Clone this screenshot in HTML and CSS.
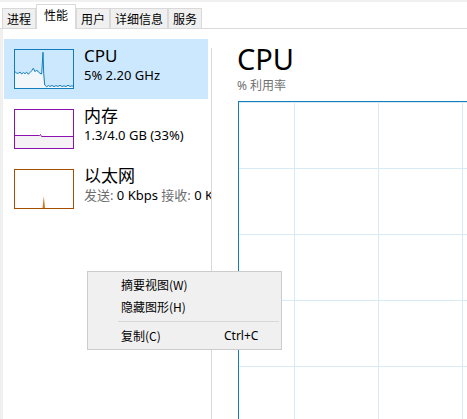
FILE: index.html
```html
<!DOCTYPE html>
<html lang="zh-CN">
<head>
<meta charset="utf-8">
<link rel="stylesheet" href="styles.css">
</head>
<body>
<div class="window">
  <div class="tabbar">
    <div class="tab">进程</div>
    <div class="tab tab-active">性能</div>
    <div class="tab">用户</div>
    <div class="tab">详细信息</div>
    <div class="tab">服务</div>
  </div>
  <div class="main">
    <div class="edge"></div>
    <div class="sidebar">
      <div class="item item-selected">
        <svg class="thumb" width="60" height="40" viewBox="0 0 60 40">
          <path class="cpu-fill" d="M1 22.7 L2.5 24 L4.3 24.3 L6 23 L7.7 25 L9.5 23.5 L11 24.7 L12.7 23.2 L14.3 25.3 L16 23.5 L17.7 21.7 L19.3 19.3 L21 22.7 L22.7 21 L24.3 23 L26 24.3 L27.7 25 L29 3.3 L29.7 24.3 L30.7 36 L32.7 37.7 L34.5 36.5 L36 37.5 L38 36.4 L40 37.6 L42 36.6 L44 37.4 L46 36.3 L48 37.5 L50 36.8 L52 37.6 L54 36.2 L56 37.4 L58 36.8 L59 37.3 L59 39 L1 39 Z"/>
          <path class="cpu-line" d="M1 22.7 L2.5 24 L4.3 24.3 L6 23 L7.7 25 L9.5 23.5 L11 24.7 L12.7 23.2 L14.3 25.3 L16 23.5 L17.7 21.7 L19.3 19.3 L21 22.7 L22.7 21 L24.3 23 L26 24.3 L27.7 25 L29 3.3 L29.7 24.3 L30.7 36 L32.7 37.7 L34.5 36.5 L36 37.5 L38 36.4 L40 37.6 L42 36.6 L44 37.4 L46 36.3 L48 37.5 L50 36.8 L52 37.6 L54 36.2 L56 37.4 L58 36.8 L59 37.3"/>
          <rect class="cpu-box" x="0.5" y="0.5" width="59" height="39"/>
        </svg>
        <div class="info">
          <div class="title">CPU</div>
          <div class="sub">5% 2.20 GHz</div>
        </div>
      </div>
      <div class="item">
        <svg class="thumb" width="60" height="40" viewBox="0 0 60 40">
          <path class="mem-fill" d="M1 26.5 L25.5 26.5 L26.5 25.5 L27.5 27.5 L59 27.5 L59 39 L1 39 Z"/>
          <path class="mem-line" d="M1 26.5 L25.5 26.5 L26.5 25.5 L27.5 27.5 L59 27.5"/>
          <rect class="mem-box" x="0.5" y="0.5" width="59" height="39"/>
        </svg>
        <div class="info">
          <div class="title">内存</div>
          <div class="sub">1.3/4.0 GB (33%)</div>
        </div>
      </div>
      <div class="item">
        <svg class="thumb" width="60" height="40" viewBox="0 0 60 40">
          <path class="net-spike" d="M28.6 39 L29.8 27 L31 39 Z"/>
          <rect class="net-box" x="0.5" y="0.5" width="59" height="39"/>
        </svg>
        <div class="info">
          <div class="title">以太网</div>
          <div class="sub"><span class="muted">发送:</span> 0 Kbps <span class="muted">接收:</span> 0 Kbps</div>
        </div>
      </div>
    </div>
    <div class="divider"></div>
    <div class="content">
      <div class="heading">CPU</div>
      <div class="caption">% 利用率</div>
      <div class="graph"></div>
    </div>
  </div>
  <div class="menu">
    <div class="menu-item"><span class="menu-label">摘要视图(W)</span></div>
    <div class="menu-item"><span class="menu-label">隐藏图形(H)</span></div>
    <div class="menu-sep"></div>
    <div class="menu-item"><span class="menu-label">复制(C)</span><span class="menu-key">Ctrl+C</span></div>
  </div>
</div>
</body>
</html>
```

FILE: styles.css
```css
* { box-sizing: border-box; }
html, body {
  margin: 0;
  padding: 0;
  background: #ffffff;
}
body {
  width: 467px;
  height: 419px;
  overflow: hidden;
  font-family: "Noto Sans", "Noto Sans CJK SC", sans-serif;
  color: #000;
}
.window {
  position: relative;
  width: 467px;
  height: 419px;
  display: flex;
  flex-direction: column;
}
.tabbar {
  height: 29px;
  flex: none;
  display: flex;
  align-items: flex-end;
  padding-left: 2px;
  border-top: 2px solid #f0f0f0;
  border-bottom: 1px solid #d9d9d9;
}
.tab {
  height: 20px;
  padding: 1px 4px 0;
  border: 1px solid #d9d9d9;
  border-bottom: none;
  background: #f0f0f0;
  font-family: "Noto Sans CJK SC", sans-serif;
  font-size: 12px;
  line-height: 18px;
}
.tab-active {
  height: 25px;
  margin-bottom: -1px;
  padding: 1px 7px 0;
  background: #ffffff;
  position: relative;
  z-index: 1;
}
.main {
  flex: 1;
  display: flex;
  min-height: 0;
}
.edge {
  width: 3px;
  flex: none;
  background: #f0f0f0;
}
.sidebar {
  width: 208px;
  flex: none;
  padding-top: 10px;
  overflow: hidden;
  padding-left: 1px;
}
.item {
  width: 204px;
  height: 60px;
  display: flex;
  align-items: flex-start;
  white-space: nowrap;
}
.item-selected {
  background: #cce8ff;
}
.thumb {
  flex: none;
  margin: 10px 10px 0 10px;
  display: block;
}
.cpu-box { fill: none; stroke: #117dbb; stroke-width: 1; }
.cpu-line { fill: none; stroke: #117dbb; stroke-width: 1; }
.cpu-fill { fill: #f1f6fa; }
.mem-box { fill: none; stroke: #8b12ae; stroke-width: 1; }
.mem-line { fill: none; stroke: #8b12ae; stroke-width: 1; }
.mem-fill { fill: #f4f2f4; }
.net-box { fill: none; stroke: #a74f01; stroke-width: 1; }
.net-spike { fill: #d3731f; }
.info {
  padding-top: 6px;
}
.title {
  font-size: 17px;
  line-height: 22px;
}
.sub {
  font-size: 13px;
  line-height: 17px;
}
.muted { color: #6d6d6d; }
.divider {
  width: 1px;
  flex: none;
  margin-top: 19px;
  background: #d9d9d9;
}
.content {
  flex: 1;
  padding-left: 25px;
  min-width: 0;
  display: flex;
  flex-direction: column;
}
.heading {
  font-size: 29px;
  line-height: 36px;
  margin-top: 12px;
}
.caption {
  font-size: 12px;
  line-height: 16px;
  color: #707070;
  margin-top: 1px;
}
.graph {
  margin-top: 7px;
  margin-left: 1px;
  flex: 1;
  width: 400px;
  border: 1px solid #117dbb;
  border-bottom: none;
  border-right: none;
  background-color: #fff;
  background-image:
    linear-gradient(to right, transparent 83px, #d9eaf4 83px),
    linear-gradient(to bottom, transparent 65px, #d9eaf4 65px);
  background-size: 84px 100%, 100% 66px;
  background-position: -28px 0, 0 1px;
}
.menu {
  position: absolute;
  left: 87px;
  top: 271px;
  width: 195px;
  height: 79px;
  background: #f0f0f0;
  border: 1px solid #cccccc;
  padding: 2px 0;
  font-size: 12px;
  font-family: "Noto Sans CJK SC", sans-serif;
  z-index: 5;
}
.menu-item {
  height: 22px;
  line-height: 22px;
  display: flex;
  padding-left: 33px;
}
.menu-label {
  width: 103px;
}
.menu-key {
  font-family: "Noto Sans", sans-serif;
}
.menu-sep {
  height: 7px;
  margin: 0 2px 0 30px;
  position: relative;
}
.menu-sep::after {
  content: "";
  position: absolute;
  left: 0;
  right: 0;
  top: 3px;
  height: 1px;
  background: #d7d7d7;
}
```
